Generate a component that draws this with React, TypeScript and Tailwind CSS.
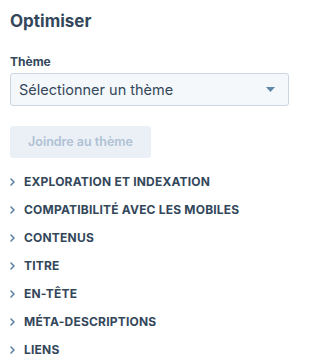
const sections = [
  "EXPLORATION ET INDEXATION",
  "COMPATIBILITÉ AVEC LES MOBILES",
  "CONTENUS",
  "TITRE",
  "EN-TÊTE",
  "MÉTA-DESCRIPTIONS",
  "LIENS",
];

function Chevron() {
  return (
    <svg width="5" height="8" viewBox="0 0 5 8" className="shrink-0">
      <path d="M1 1 L4 4 L1 7" fill="none" stroke="#5a7fa3" strokeWidth="1.5" strokeLinecap="round" strokeLinejoin="round" />
    </svg>
  );
}

export default function App() {
  return (
    <div className="w-[295px] h-[363px] bg-white px-[10px] pt-[9px] text-[#33475b] font-['Inter',sans-serif] overflow-hidden">
      <h2 className="text-[17px] font-bold leading-[24px]">Optimiser</h2>

      <label className="block mt-[21px] text-[12px] font-bold leading-[16px]">Thème</label>
      <div className="mt-[3px] h-[33px] w-[279px] flex items-center justify-between rounded-[3px] border border-[#cbd6e2] bg-[#f5f8fa] pl-[8px] pr-[13px]">
        <span className="text-[14.5px]">Sélectionner un thème</span>
        <svg width="9" height="5" viewBox="0 0 9 5">
          <path d="M0 0 L9 0 L4.5 5 Z" fill="#5f87a8" />
        </svg>
      </div>

      <button className="mt-[20px] h-[32px] w-[141px] rounded-[3px] bg-[#eaf0f6] text-[12.5px] font-semibold text-[#b0c1d4]">
        Joindre au thème
      </button>

      <ul className="mt-[10px] flex flex-col">
        {sections.map((s) => (
          <li key={s} className="h-[28px] flex items-center gap-[9px]">
            <Chevron />
            <span className="text-[12px] font-bold tracking-[0.2px]">{s}</span>
          </li>
        ))}
      </ul>
    </div>
  );
}
